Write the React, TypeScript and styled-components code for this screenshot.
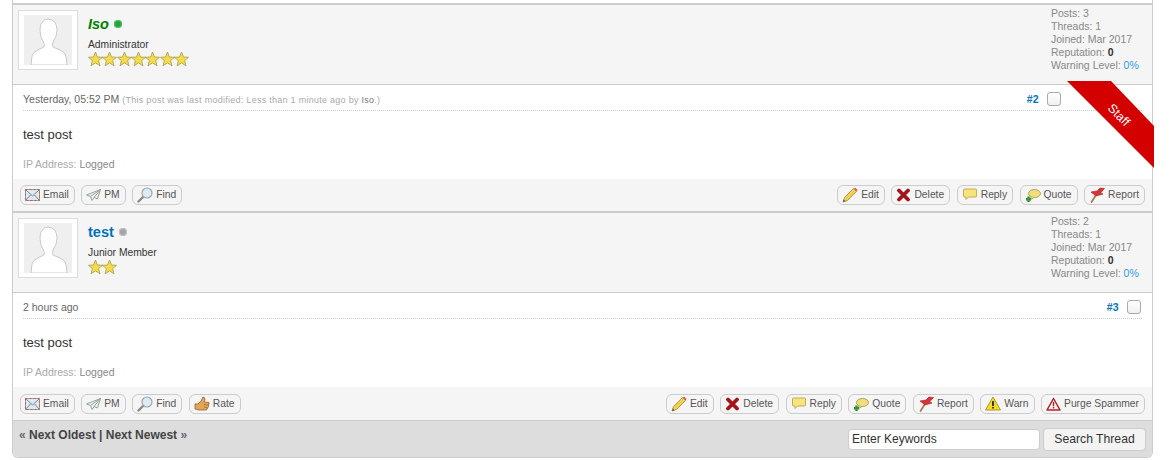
import React from 'react'
import styled, { createGlobalStyle } from 'styled-components'

const GlobalStyle = createGlobalStyle`
  html, body {
    margin: 0;
    padding: 0;
    background: #fff;
    font-family: 'Liberation Sans', Arial, sans-serif;
  }
`

const Page = styled.div`
  width: 1170px;
  height: 460px;
  box-sizing: border-box;
  padding: 0 17px 0 12px;
  overflow: hidden;
`

const Thread = styled.div`
  box-sizing: border-box;
  height: 458px;
  padding-top: 3px;
  border: 1px solid #ccc;
  border-top: 0;
  border-radius: 0 0 6px 6px;
`

const Post = styled.div`
  position: relative;
  border-top: 2px solid #ccc;
`

const Author = styled.div`
  display: flex;
  justify-content: space-between;
  box-sizing: border-box;
  height: 80px;
  padding: 0 14px 0 5px;
  background: #f5f5f5;
  border-bottom: 1px solid #ccc;
`

const Profile = styled.div`
  display: flex;
  gap: 10px;
  padding-top: 5px;
`

const AvatarFrame = styled.div`
  box-sizing: border-box;
  width: 60px;
  height: 60px;
  padding: 4px 5px;
  background: #fff;
  border: 1px solid #ddd;
  svg {
    display: block;
  }
`

const Identity = styled.div`
  display: flex;
  flex-direction: column;
  align-items: flex-start;
  padding-top: 4px;
`

const NameRow = styled.div`
  display: flex;
  align-items: center;
  gap: 5px;
  height: 20px;
`

const Name = styled.span<{ $online?: boolean }>`
  font-size: 14.5px;
  font-weight: 700;
  font-style: ${p => (p.$online ? 'italic' : 'normal')};
  color: ${p => (p.$online ? '#008000' : '#0072bc')};
`

const Dot = styled.span<{ $online?: boolean }>`
  width: 8px;
  height: 8px;
  border-radius: 50%;
  background: ${p => (p.$online ? '#22a53c' : '#a5a5a5')};
  box-shadow: inset 0 0 0 1px ${p => (p.$online ? '#58c66c' : '#c4c4c4')};
`

const Role = styled.div`
  font-size: 10.3px;
  line-height: 13px;
  margin-top: 3.5px;
  color: #333;
`

const Stars = styled.div`
  display: flex;
  height: 16px;
  margin-top: 0.5px;
  svg {
    display: block;
    margin-right: -0.7px;
  }
`

const Stats = styled.div`
  width: 87px;
  padding-top: 2px;
  font-size: 10.5px;
  line-height: 13px;
  white-space: nowrap;
  color: #888;
  b {
    color: #333;
  }
  span {
    color: #2f9fdc;
  }
`

const Body = styled.div`
  box-sizing: border-box;
  height: 94px;
  padding: 0 10px;
  background: #fff;
`

const PostHead = styled.div`
  display: flex;
  align-items: center;
  justify-content: space-between;
  box-sizing: border-box;
  height: 26px;
  padding-top: 2px;
  border-bottom: 1px dotted #ccc;
`

const Stamp = styled.div`
  font-size: 10.5px;
  color: #666;
  small {
    font-size: 9px;
    letter-spacing: 0.27px;
    color: #aaa;
  }
  small b {
    font-weight: 400;
    color: #777;
  }
`

const PostMeta = styled.div<{ $clear?: boolean }>`
  display: flex;
  align-items: center;
  gap: 8.5px;
  padding-right: ${p => (p.$clear ? '81px' : '1px')};
`

const PostNumber = styled.span`
  font-size: 10.5px;
  font-weight: 700;
  color: #0072bc;
`

const Check = styled.span`
  box-sizing: border-box;
  width: 14px;
  height: 14px;
  background: linear-gradient(#fff, #f0f0f0);
  border: 1px solid #aaa;
  border-radius: 3px;
`

const Message = styled.div`
  padding-top: 16px;
  font-size: 13px;
  line-height: 16px;
  color: #333;
`

const IpLine = styled.div`
  padding-top: 15px;
  font-size: 10.5px;
  line-height: 13px;
  color: #aaa;
  span {
    color: #888;
  }
`

const Controls = styled.div<{ $tall?: boolean }>`
  display: flex;
  justify-content: space-between;
  align-items: flex-start;
  box-sizing: border-box;
  height: ${p => (p.$tall ? '33px' : '32px')};
  padding: ${p => (p.$tall ? '7px' : '6px')} 7px 0 7px;
  background: #f5f5f5;
`

const ButtonGroup = styled.div`
  display: flex;
  gap: 6.5px;
`

const PostButton = styled.a`
  display: flex;
  align-items: center;
  gap: 3px;
  box-sizing: border-box;
  height: 20px;
  padding: 0 5px 1px 4px;
  font-size: 10.3px;
  color: #555;
  background: #f5f5f5;
  border: 1px solid #ccc;
  border-radius: 6px;
  svg {
    display: block;
    flex: none;
  }
`

const Ribbon = styled.div`
  position: absolute;
  top: 76px;
  right: -2px;
  width: 87px;
  height: 88px;
  background: #d40000;
  clip-path: polygon(0 0, 44px 0, 87px 45px, 87px 87px);
`

const RibbonLabel = styled.span`
  position: absolute;
  top: 27px;
  left: 39px;
  font-size: 12.5px;
  color: #fff;
  transform: rotate(45deg);
`

const Footer = styled.div`
  display: flex;
  justify-content: space-between;
  height: 37px;
  box-sizing: border-box;
  padding: 6px 6px 0 6px;
  background: #ddd;
  border-top: 1px solid #ccc;
  border-radius: 0 0 5px 5px;
`

const Pager = styled.div`
  padding-top: 1px;
  font-size: 12px;
  font-weight: 700;
  line-height: 14px;
  color: #444;
  span {
    color: #667;
  }
`

const SearchForm = styled.div`
  display: flex;
  align-items: center;
  gap: 3px;
  height: 24px;
`

const SearchInput = styled.div`
  box-sizing: border-box;
  width: 192px;
  height: 21px;
  padding: 0 3px;
  font-size: 12px;
  line-height: 19px;
  color: #333;
  background: #fff;
  border: 1px solid #ccc;
  border-radius: 4px;
`

const SearchButton = styled.div`
  box-sizing: border-box;
  width: 103px;
  height: 23px;
  font-size: 12.2px;
  line-height: 21px;
  text-align: center;
  color: #333;
  background: #f3f3f3;
  border: 1px solid #ccc;
  border-radius: 4px;
`

const Avatar = () => (
  <svg width="48" height="50" viewBox="0 0 48 50">
    <rect width="48" height="50" fill="#efefef" />
    <path
      d="M7 50 L8 41 Q9 37 14 35 L20 32 Q21 30 19 26 Q16 22 16 15 Q16 5 24 4 Q33 5 33 15 Q33 22 29 27 Q28 30 29 32 L36 35 Q41 37 42 41 L43 50 Z"
      fill="#fff"
      stroke="#c4c4c4"
      strokeWidth="0.9"
    />
  </svg>
)

const Star = () => (
  <svg width="15" height="16" viewBox="0 0 15 16">
    <path
      d="M7.5 1 L9.5 6 L14.5 6.3 L10.6 9.6 L12 14.8 L7.5 11.9 L3 14.8 L4.4 9.6 L0.5 6.3 L5.5 6 Z"
      fill="#f3dc4a"
      stroke="#a89a50"
      strokeWidth="0.8"
    />
  </svg>
)

const EmailIcon = () => (
  <svg width="15" height="12" viewBox="0 0 15 12">
    <rect x="0.5" y="0.5" width="14" height="11" fill="#dfe9ee" stroke="#8aa" />
    <rect x="0.5" y="0.5" width="14" height="11" fill="none" stroke="#c55" strokeDasharray="2 2" />
    <path d="M1 1 L7.5 7 L14 1 M1 11 L5.5 6 M14 11 L9.5 6" fill="none" stroke="#789" />
  </svg>
)

const PlaneIcon = () => (
  <svg width="15" height="12" viewBox="0 0 15 12">
    <path d="M14.5 0.5 L0.5 6 L4.5 7.5 L6 11.5 L8 8.5 L11.5 10 Z" fill="#eef2ee" stroke="#98a498" strokeLinejoin="round" />
    <path d="M14.5 0.5 L4.5 7.5 M14.5 0.5 L8 8.5" fill="none" stroke="#98a498" />
  </svg>
)

const FindIcon = () => (
  <svg width="16" height="16" viewBox="0 0 16 16">
    <path d="M6 10 L1.5 14.5" stroke="#8d8a85" strokeWidth="2.4" strokeLinecap="round" />
    <circle cx="10" cy="6" r="5" fill="#dcecf6" stroke="#9aa8b0" strokeWidth="1.2" />
  </svg>
)

const RateIcon = () => (
  <svg width="16" height="16" viewBox="0 0 16 16">
    <path
      d="M1 8 L4 8 L7 5 L9 1 Q11 1 11 4 L10 6 L15 6.5 Q15.5 8 14.5 9 Q15 11 13.5 12 Q13.5 14 11.5 14 L5 14 L1 13 Z"
      fill="#e2a45a"
      stroke="#96632a"
      strokeWidth="0.8"
    />
    <path d="M10 8.5 L14.5 9 M10 11 L13.5 12" stroke="#96632a" strokeWidth="0.7" />
  </svg>
)

const EditIcon = () => (
  <svg width="16" height="16" viewBox="0 0 16 16">
    <path d="M1 15 L2.5 10.5 L11.5 1.5 L14.5 4.5 L5.5 13.5 Z" fill="#f1cd52" stroke="#a88a35" strokeWidth="0.8" />
    <path d="M1 15 L1.8 12.5 L3.5 14.2 Z" fill="#555" />
    <path d="M11.5 1.5 L14.5 4.5 L15.5 3 L13.5 0.8 Z" fill="#d8605c" />
  </svg>
)

const DeleteIcon = () => (
  <svg width="15" height="14" viewBox="0 0 15 14">
    <path d="M3 2.5 L12 11.5 M12 2.5 L3 11.5" stroke="#a5141c" strokeWidth="3.8" strokeLinecap="round" />
  </svg>
)

const ReplyIcon = () => (
  <svg width="16" height="13" viewBox="0 0 16 13">
    <path d="M2.5 1 H13.5 Q14.5 1 14.5 2 V8 Q14.5 9 13.5 9 H6.5 L4 11.5 V9 H2.5 Q1.5 9 1.5 8 V2 Q1.5 1 2.5 1 Z" fill="#f8e47c" stroke="#c4ab55" />
  </svg>
)

const QuoteIcon = () => (
  <svg width="16" height="16" viewBox="0 0 16 16">
    <ellipse cx="9.5" cy="6.5" rx="6" ry="4" fill="#f2de78" stroke="#a9a36b" />
    <path d="M6 10 L5 13 L9 10.5" fill="#f2de78" stroke="#a9a36b" />
    <path d="M3.5 9.5 V15 M1 12.2 H6" stroke="#2f9a35" strokeWidth="2.4" />
  </svg>
)

const ReportIcon = () => (
  <svg width="16" height="16" viewBox="0 0 16 16">
    <path d="M2.5 15 L7 8" stroke="#a77a58" strokeWidth="1.8" strokeLinecap="round" />
    <path d="M2 5 L8 4 L11 1 L15.5 1.5 L11.5 6 L14 7 L7 9 Z" fill="#d9333a" stroke="#a31a22" strokeWidth="0.6" />
  </svg>
)

const WarnIcon = () => (
  <svg width="16" height="15" viewBox="0 0 16 15">
    <path d="M8 1 L15.5 14 H0.5 Z" fill="#f5d92e" stroke="#b09a22" strokeLinejoin="round" />
    <path d="M8 5 V10 M8 11 V12.6" stroke="#222" strokeWidth="1.7" />
  </svg>
)

const PurgeIcon = () => (
  <svg width="15" height="14" viewBox="0 0 15 14">
    <path d="M7.5 1.5 L14 13 H1 Z" fill="#fbeeee" stroke="#b4222a" strokeWidth="1.5" strokeLinejoin="round" />
    <path d="M7.5 5 V9.2 M7.5 10 V11.6" stroke="#b4222a" strokeWidth="1.4" />
  </svg>
)

interface ControlItem {
  label: string
  icon: React.ReactNode
}

const baseLeft: ControlItem[] = [
  { label: 'Email', icon: <EmailIcon /> },
  { label: 'PM', icon: <PlaneIcon /> },
  { label: 'Find', icon: <FindIcon /> },
]

const baseRight: ControlItem[] = [
  { label: 'Edit', icon: <EditIcon /> },
  { label: 'Delete', icon: <DeleteIcon /> },
  { label: 'Reply', icon: <ReplyIcon /> },
  { label: 'Quote', icon: <QuoteIcon /> },
  { label: 'Report', icon: <ReportIcon /> },
]

const Buttons = ({ items }: { items: ControlItem[] }) => (
  <ButtonGroup>
    {items.map(item => (
      <PostButton key={item.label}>
        {item.icon}
        {item.label}
      </PostButton>
    ))}
  </ButtonGroup>
)

export default function App() {
  return (
    <Page>
      <GlobalStyle />
      <Thread>
        <Post>
          <Author>
            <Profile>
              <AvatarFrame>
                <Avatar />
              </AvatarFrame>
              <Identity>
                <NameRow>
                  <Name $online>Iso</Name>
                  <Dot $online />
                </NameRow>
                <Role>Administrator</Role>
                <Stars>
                  {Array.from({ length: 7 }, (_, i) => (
                    <Star key={i} />
                  ))}
                </Stars>
              </Identity>
            </Profile>
            <Stats>
              Posts: 3<br />
              Threads: 1<br />
              Joined: Mar 2017<br />
              Reputation: <b>0</b>
              <br />
              Warning Level: <span>0%</span>
            </Stats>
          </Author>
          <Body>
            <PostHead>
              <Stamp>
                Yesterday, 05:52 PM{' '}
                <small>
                  (This post was last modified: Less than 1 minute ago by <b>Iso</b>.)
                </small>
              </Stamp>
              <PostMeta $clear>
                <PostNumber>#2</PostNumber>
                <Check />
              </PostMeta>
            </PostHead>
            <Message>test post</Message>
            <IpLine>
              IP Address: <span>Logged</span>
            </IpLine>
          </Body>
          <Controls>
            <Buttons items={baseLeft} />
            <Buttons items={baseRight} />
          </Controls>
          <Ribbon>
            <RibbonLabel>Staff</RibbonLabel>
          </Ribbon>
        </Post>
        <Post>
          <Author>
            <Profile>
              <AvatarFrame>
                <Avatar />
              </AvatarFrame>
              <Identity>
                <NameRow>
                  <Name>test</Name>
                  <Dot />
                </NameRow>
                <Role>Junior Member</Role>
                <Stars>
                  <Star />
                  <Star />
                </Stars>
              </Identity>
            </Profile>
            <Stats>
              Posts: 2<br />
              Threads: 1<br />
              Joined: Mar 2017<br />
              Reputation: <b>0</b>
              <br />
              Warning Level: <span>0%</span>
            </Stats>
          </Author>
          <Body>
            <PostHead>
              <Stamp>2 hours ago</Stamp>
              <PostMeta>
                <PostNumber>#3</PostNumber>
                <Check />
              </PostMeta>
            </PostHead>
            <Message>test post</Message>
            <IpLine>
              IP Address: <span>Logged</span>
            </IpLine>
          </Body>
          <Controls $tall>
            <Buttons items={[...baseLeft, { label: 'Rate', icon: <RateIcon /> }]} />
            <Buttons
              items={[
                ...baseRight,
                { label: 'Warn', icon: <WarnIcon /> },
                { label: 'Purge Spammer', icon: <PurgeIcon /> },
              ]}
            />
          </Controls>
        </Post>
        <Footer>
          <Pager>
            <span>«</span> Next Oldest | Next Newest <span>»</span>
          </Pager>
          <SearchForm>
            <SearchInput>Enter Keywords</SearchInput>
            <SearchButton>Search Thread</SearchButton>
          </SearchForm>
        </Footer>
      </Thread>
    </Page>
  )
}
